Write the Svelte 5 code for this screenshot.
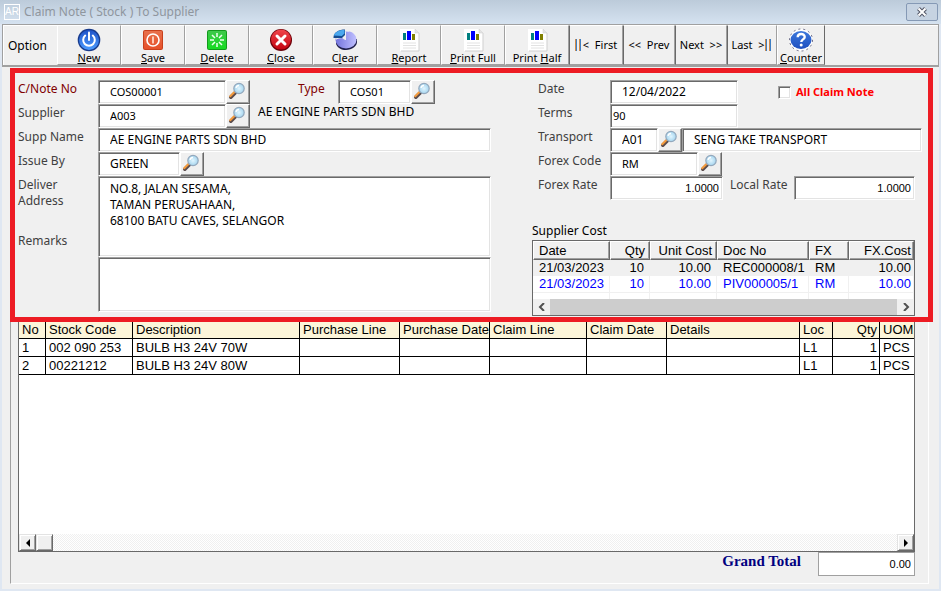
<script>

let note_no = $state("COS00001")
let note_type = $state("COS01")
let supplier = $state("A003")
let supp_name = $state("AE ENGINE PARTS SDN BHD")
let issue_by = $state("GREEN")
let address = $state("NO.8, JALAN SESAMA,\nTAMAN PERUSAHAAN,\n68100 BATU CAVES, SELANGOR")
let remarks = $state("")

let note_date = $state("12/04/2022")
let terms = $state("90")
let transport = $state("A01")
let transport_name = $state("SENG TAKE TRANSPORT")
let forex_code = $state("RM")
let forex_rate = $state("1.0000")
let local_rate = $state("1.0000")
let all_claims = $state(false)
let grand_total = $state("0.00")

// key is the position of the underlined letter
const actions = [
  { label: "New", key: 0, icon: "power" },
  { label: "Save", key: 0, icon: "save" },
  { label: "Delete", key: 0, icon: "delete" },
  { label: "Close", key: 0, icon: "close" },
  { label: "Clear", key: 1, icon: "pie" },
  { label: "Report", key: 0, icon: "report" },
  { label: "Print Full", key: 0, icon: "report" },
  { label: "Print Half", key: 6, icon: "report" }
]

const costs = [
  { date: "21/03/2023", qty: 10, unit: "10.00", doc: "REC000008/1", fx: "RM", cost: "10.00" },
  { date: "21/03/2023", qty: 10, unit: "10.00", doc: "PIV000005/1", fx: "RM", cost: "10.00" }
]

const items = [
  { no: 1, code: "002 090 253", desc: "BULB H3 24V 70W", loc: "L1", qty: 1, uom: "PCS" },
  { no: 2, code: "00221212", desc: "BULB H3 24V 80W", loc: "L1", qty: 1, uom: "PCS" }
]

</script>

{#snippet icon(name)}
  <svg class="icon" viewBox="0 0 24 24" aria-hidden="true">
    {#if name === "power"}
      <circle cx="12" cy="12" r="11.3" fill="#173a8c" />
      <circle cx="12" cy="12" r="10" fill="url(#g-blue)" />
      <path d="M8.2 7.6a5.8 5.8 0 1 0 7.6 0" fill="none" stroke="#fff" stroke-width="2" stroke-linecap="round" />
      <path d="M12 4.5v7.5" stroke="#fff" stroke-width="2" stroke-linecap="round" />
    {:else if name === "save"}
      <rect x="2" y="2" width="20" height="20" rx="2" fill="#c8401c" />
      <rect x="3" y="3" width="18" height="18" rx="1" fill="url(#g-orange)" />
      <circle cx="12" cy="12" r="6" fill="none" stroke="#fff" stroke-width="1.6" />
      <path d="M12 8.5v7" stroke="#ffd9c8" stroke-width="1.8" />
    {:else if name === "delete"}
      <rect x="2" y="2" width="20" height="20" rx="2" fill="#139a1c" />
      <rect x="3" y="3" width="18" height="18" rx="1" fill="url(#g-green)" />
      <path d="M12 5v4M12 15v4M5 12h4M15 12h4M7 7l3 3M14 14l3 3M17 7l-3 3M10 14l-3 3" stroke="#f0fff0" stroke-width="1.5" />
    {:else if name === "close"}
      <circle cx="12" cy="12" r="11" fill="#6a0008" />
      <circle cx="12" cy="11.6" r="10" fill="url(#g-red)" />
      <path d="M8 8l8 8M16 8l-8 8" stroke="#fff" stroke-width="3" stroke-linecap="round" />
    {:else if name === "pie"}
      <path d="M3 12v4c2 4 5 6 10 6 6 0 11-4 11-8v-3z" fill="#20204c" />
      <ellipse cx="13" cy="12" rx="10.5" ry="8.5" fill="url(#g-pie)" />
      <path d="M13 12V3.5H4L3 12z" fill="#efefef" />
      <path d="M3 11.500c2-1 4-1.500 6-1.500l4 2.500V8l3-4.400c4 .5 7 3.500 7.300 7L12 18z" fill="url(#g-pie)" />
      <path d="M0.5 9C1 4 6 1.500 12 1.500V7L9 10H0.5z" fill="#164d91" />
      <path d="M0.8 7.500C2 4 6 2 11.500 2V5.500L8.800 8z" fill="#4ba8ee" />
    {:else if name === "report"}
      <path d="M3 1h15l4 4v18H3z" fill="#fff" />
      <path d="M4 23h18V5" fill="none" stroke="#cfcfcf" />
      <path d="M18 1v4h4z" fill="#e4e4e4" stroke="#cfcfcf" stroke-width=".5" />
      <path d="M6 5h3v7H6z" fill="#008080" />
      <path d="M10 3h4v9h-4z" fill="#0000ff" />
      <path d="M15 6h3v6h-3z" fill="#808000" />
      <path d="M6 15h13M6 17.500h13M6 20h13" stroke="#e2e2e2" />
    {:else if name === "help"}
      <ellipse cx="12" cy="12" rx="11.5" ry="11" fill="#fff" stroke="#49496b" stroke-width=".8" stroke-dasharray="2 3" />
      <ellipse cx="12" cy="12" rx="10.500" ry="9" fill="url(#g-help)" />
      <path d="M8.700 9.300c0-4.400 7-4.300 7-.4 0 2.400-3.400 2.500-3.400 5" fill="none" stroke="#fff" stroke-width="2.400" />
      <circle cx="12.200" cy="17" r="1.500" fill="#fff" />
    {/if}
  </svg>
{/snippet}

{#snippet lookup(label)}
  <button class="lookup" aria-label={label}>
    <svg viewBox="0 0 18 18" aria-hidden="true">
      <path d="M2.800 15.200l5-5" stroke="#5b4c4c" stroke-width="3.600" stroke-linecap="round" />
      <path d="M2.200 14.200l4-4" stroke="#f39a3c" stroke-width="2" stroke-linecap="round" />
      <circle cx="11" cy="6.500" r="5.200" fill="url(#g-lens)" stroke="#94a8bc" stroke-width="1.200" />
      <path d="M8 6a3 3 0 0 1 3-2.500" fill="none" stroke="#fff" stroke-width="1.300" />
    </svg>
  </button>
{/snippet}

<svg class="defs" aria-hidden="true">
  <defs>
    <linearGradient id="g-blue" x1="0" y1="0" x2="0" y2="1"><stop stop-color="#1f52c8" /><stop offset="1" stop-color="#4c9cff" /></linearGradient>
    <linearGradient id="g-help" x1="0" y1="0" x2="0" y2="1"><stop stop-color="#3c78dc" /><stop offset="1" stop-color="#1f50c0" /></linearGradient>
    <linearGradient id="g-orange" x1="0" y1="0" x2="0" y2="1"><stop stop-color="#e8704c" /><stop offset="1" stop-color="#e6512a" /></linearGradient>
    <linearGradient id="g-green" x1="0" y1="0" x2="0" y2="1"><stop stop-color="#3fc84a" /><stop offset="1" stop-color="#16dc22" /></linearGradient>
    <linearGradient id="g-red" x1="0" y1="0" x2="0" y2="1"><stop stop-color="#f0454b" /><stop offset="1" stop-color="#c40410" /></linearGradient>
    <linearGradient id="g-pie"><stop stop-color="#7474dc" /><stop offset="1" stop-color="#c0c0ff" /></linearGradient>
    <radialGradient id="g-lens"><stop stop-color="#e2f6ff" /><stop offset="1" stop-color="#a4d4ee" /></radialGradient>
  </defs>
</svg>

<div class="window">
  <header class="titlebar">
    <span class="app_icon">AR</span>
    <h1>Claim Note ( Stock ) To Supplier</h1>
    <button class="win_close" aria-label="Close window">
      <svg viewBox="0 0 12 10" aria-hidden="true">
        <path d="M2.500 1.500l7 7M9.500 1.500l-7 7" stroke="#535666" stroke-width="4" />
        <path d="M2.500 1.500l7 7M9.500 1.500l-7 7" stroke="#fff" stroke-width="2" />
      </svg>
    </button>
  </header>

  <nav class="toolbar">
    <span class="option">Option</span>
    {#each actions as a}
      <button class="tool">
        {@render icon(a.icon)}
        <span>{a.label.slice(0, a.key)}<u>{a.label[a.key]}</u>{a.label.slice(a.key + 1)}</span>
      </button>
    {/each}
    <button class="step first"><i></i><i></i>&lt;&nbsp; First</button>
    <button class="step">&lt;&lt;&nbsp; Prev</button>
    <button class="step">Next&nbsp; &gt;&gt;</button>
    <button class="step last">Last&nbsp; &gt;<i></i><i></i></button>
    <button class="tool counter">
      {@render icon("help")}
      <span><u>C</u>ounter</span>
    </button>
  </nav>

  <main>
    <section class="frame">
      <div class="left">
        <label class="key" for="note_no">C/Note No</label>
        <div class="row">
          <input id="note_no" class="w128 small" bind:value={note_no}>
          {@render lookup("Find claim note")}
          <label class="key type" for="note_type">Type</label>
          <input id="note_type" class="w72 small" bind:value={note_type}>
          {@render lookup("Find type")}
        </div>

        <label for="supplier">Supplier</label>
        <div class="row">
          <input id="supplier" class="w128 small" bind:value={supplier}>
          {@render lookup("Find supplier")}
          <output for="supplier">{supp_name}</output>
        </div>

        <label for="supp_name">Supp Name</label>
        <div class="row"><input id="supp_name" class="grow" bind:value={supp_name}></div>

        <label for="issue_by">Issue By</label>
        <div class="row">
          <input id="issue_by" class="w82" bind:value={issue_by}>
          {@render lookup("Find issuer")}
        </div>

        <div class="stack">
          <label for="address">Deliver<br>Address</label>
          <label for="remarks">Remarks</label>
        </div>
        <div class="areas">
          <textarea id="address" rows="4" bind:value={address}></textarea>
          <textarea id="remarks" class="short" rows="2" bind:value={remarks}></textarea>
        </div>
      </div>

      <div class="right">
        <div class="fields">
          <label for="note_date">Date</label>
          <div class="row">
            <input id="note_date" class="w128" bind:value={note_date}>
            <label class="all"><input type="checkbox" bind:checked={all_claims}>All Claim Note</label>
          </div>

          <label for="terms">Terms</label>
          <div class="row"><input id="terms" class="w128 small tight" bind:value={terms}></div>

          <label for="transport">Transport</label>
          <div class="row">
            <input id="transport" class="w48" bind:value={transport}>
            {@render lookup("Find transport")}
            <input class="grow" aria-label="Transport name" bind:value={transport_name}>
          </div>

          <label for="forex_code">Forex Code</label>
          <div class="row">
            <input id="forex_code" class="w88 small" bind:value={forex_code}>
            {@render lookup("Find forex code")}
          </div>

          <label for="forex_rate">Forex Rate</label>
          <div class="row">
            <input id="forex_rate" class="w112 num" bind:value={forex_rate}>
            <label class="local" for="local_rate">Local Rate</label>
            <input id="local_rate" class="w120 num" bind:value={local_rate}>
          </div>
        </div>

        <h2>Supplier Cost</h2>
        <div class="cost_box">
          <table class="costs">
            <colgroup>
              <col class="c_date"><col class="c_qty"><col class="c_unit"><col><col class="c_fx"><col class="c_cost">
            </colgroup>
            <thead>
              <tr><th>Date</th><th class="r">Qty</th><th class="r">Unit Cost</th><th>Doc No</th><th>FX</th><th class="r">FX.Cost</th></tr>
            </thead>
            <tbody>
              {#each costs as c, n}
                <tr class:selected={n === 0}>
                  <td>{c.date}</td>
                  <td class="r">{c.qty}</td>
                  <td class="r">{c.unit}</td>
                  <td>{c.doc}</td>
                  <td>{c.fx}</td>
                  <td class="r">{c.cost}</td>
                </tr>
              {/each}
              <tr class="blank"><td></td><td></td><td></td><td></td><td></td><td></td></tr>
            </tbody>
          </table>
          <div class="flat_scroll">
            <button aria-label="Scroll costs left"><svg viewBox="0 0 8 8"><path d="M6 0L2 4l4 4" /></svg></button>
            <div class="flat_thumb"></div>
            <button aria-label="Scroll costs right"><svg viewBox="0 0 8 8"><path d="M2 0l4 4-4 4" /></svg></button>
          </div>
        </div>
      </div>
    </section>

    <section class="panel">
      <div class="grid_box">
        <table class="items">
          <colgroup>
            <col class="i_no"><col class="i_code"><col class="i_desc"><col class="i_line"><col class="i_bought"><col class="i_claim">
            <col class="i_date"><col><col class="i_loc"><col class="i_qty"><col class="i_uom">
          </colgroup>
          <thead>
            <tr>
              <th>No</th><th>Stock Code</th><th>Description</th><th>Purchase Line</th><th>Purchase Date</th><th>Claim Line</th>
              <th>Claim Date</th><th>Details</th><th>Loc</th><th class="r">Qty</th><th>UOM</th>
            </tr>
          </thead>
          <tbody>
            {#each items as item}
              <tr>
                <td>{item.no}</td>
                <td>{item.code}</td>
                <td>{item.desc}</td>
                <td></td><td></td><td></td><td></td><td></td>
                <td>{item.loc}</td>
                <td class="r">{item.qty}</td>
                <td>{item.uom}</td>
              </tr>
            {/each}
          </tbody>
        </table>
        <div class="classic_scroll">
          <button aria-label="Scroll items left"><svg viewBox="0 0 8 8"><path d="M6 0v8L2 4z" /></svg></button>
          <div class="classic_thumb"></div>
          <button class="end" aria-label="Scroll items right"><svg viewBox="0 0 8 8"><path d="M2 0v8l4-4z" /></svg></button>
        </div>
      </div>
      <footer>
        <label for="grand_total">Grand Total</label>
        <input id="grand_total" class="num" bind:value={grand_total}>
      </footer>
    </section>
  </main>
</div>

<style>
  :global(body) {
    background: #dfe7f2;
  }

  .defs {
    position: absolute;
    width: 0;
    height: 0;
  }

  .window {
    box-sizing: border-box;
    display: flex;
    flex-direction: column;
    min-height: 100vh;
    padding: 0 2px 2px;
    background: #dfe7f2;
    color: #000;
    font-family: "Noto Sans", Tahoma, sans-serif;
    font-size: 12px;
    line-height: 16px;
  }

  button, input, textarea {
    box-sizing: border-box;
    margin: 0;
    font: inherit;
    color: inherit;
    border-radius: 0;
  }

  .titlebar {
    display: flex;
    align-items: center;
    height: 24px;
    margin: 0 -2px;
    padding: 0 3px 0 4px;
    background: linear-gradient(#bccbda, #d5e2f0);
  }

  .app_icon {
    box-sizing: border-box;
    width: 16px;
    height: 16px;
    border: 1px solid #fff;
    color: #fff;
    font: 10px/14px "Liberation Sans", Arial, sans-serif;
    text-align: center;
  }

  h1 {
    flex: 1;
    margin: 0 4px;
    color: #8f969e;
    font-size: 12px;
    font-weight: normal;
    line-height: 16px;
  }

  .win_close {
    display: flex;
    align-items: center;
    justify-content: center;
    width: 32px;
    height: 18px;
    padding: 0;
    border: 1px solid #8599b5;
    border-radius: 2px;
    background: #c6d3e2;
  }

  .win_close svg {
    width: 12px;
    height: 10px;
  }

  .toolbar {
    display: flex;
    height: 43px;
    box-sizing: border-box;
    border: 1px solid #a0a0a0;
    border-bottom-width: 2px;
    background: #f0f0f0;
    box-shadow: inset 1px 1px #fff;
  }

  .option {
    width: 54px;
    box-sizing: border-box;
    padding-left: 5px;
    line-height: 42px;
  }

  .tool {
    display: flex;
    flex-direction: column;
    align-items: center;
    width: 64px;
    padding: 2px 0 0;
    border: 1px solid;
    border-color: #fff #a0a0a0 #a0a0a0 #fff;
    background: #f0f0f0;
    font-size: 11px;
    line-height: 12px;
    white-space: nowrap;
  }

  .tool .icon {
    width: 24px;
    height: 24px;
    flex: none;
  }

  .counter {
    width: 48px;
    border-right-color: #696969;
  }

  .step {
    display: flex;
    align-items: center;
    justify-content: center;
    width: 52px;
    padding: 0;
    border: 1px solid;
    border-color: #fff #a0a0a0 #a0a0a0 #696969;
    background: #f0f0f0;
    white-space: nowrap;
    font-size: 11px;
  }

  .step i {
    flex: none;
    width: 1px;
    height: 12px;
    margin-right: 2px;
    border-left: 1px solid #d08b4a;
    background: #3f7fc4;
  }

  .first {
    width: 54px;
  }

  .last {
    width: 50px;
  }

  main {
    flex: 1;
    display: flex;
    flex-direction: column;
    padding: 1px 6px 5px 8px;
    background: #f0f0f0;
  }

  .frame {
    display: grid;
    grid-template-columns: minmax(0, 473fr) minmax(0, 390fr);
    column-gap: 41px;
    padding: 7px 6px 0 3px;
    border: 5px solid #ed1c24;
  }

  .left {
    display: grid;
    grid-template-columns: 80px minmax(0, 1fr);
    grid-template-rows: repeat(4, 24px) auto;
    padding-bottom: 5px;
  }

  .fields {
    display: grid;
    grid-template-columns: 72px minmax(0, 1fr);
    grid-auto-rows: 24px;
    margin-left: 6px;
  }

  label {
    padding-top: 1px;
    color: #404040;
    white-space: nowrap;
  }

  label.key {
    color: #800000;
  }

  label.type {
    width: 40px;
    margin-left: 48px;
  }

  .row {
    display: flex;
    min-width: 0;
  }

  .row output {
    padding-left: 8px;
    white-space: nowrap;
  }

  .row input, textarea {
    min-width: 0;
    padding: 0 11px;
    border: 1px solid;
    border-color: #a0a0a0 #fff #fff #a0a0a0;
    background: #fff;
    box-shadow: inset 1px 1px #696969, inset -1px -1px #e3e3e3;
    outline: none;
  }

  .row .small {
    font-size: 11px;
  }

  .row .tight {
    padding: 0 2px;
  }

  .row .num, footer .num {
    padding: 0 3px;
    font: 11px/16px "Liberation Sans", Arial, sans-serif;
    text-align: right;
  }

  .w48 { width: 48px; }
  .w72 { width: 73px; }
  .w82 { width: 82px; }
  .w88 { width: 88px; }
  .w112 { width: 113px; }
  .w120 { width: 121px; }
  .w128 { width: 128px; }
  .grow { flex: 1; }

  .lookup {
    flex: none;
    width: 24px;
    height: 24px;
    padding: 1px 3px 3px 1px;
    border: 1px solid;
    border-color: #fff #696969 #696969 #fff;
    background: #f0f0f0;
    box-shadow: inset -1px -1px #a0a0a0;
    line-height: 0;
  }

  .lookup svg {
    width: 18px;
    height: 18px;
  }

  .stack {
    display: flex;
    flex-direction: column;
    gap: 23px;
  }

  .areas {
    display: flex;
    flex-direction: column;
  }

  textarea {
    height: 81px;
    padding: 4px 11px;
    resize: none;
    overflow: hidden;
  }

  textarea.short {
    height: 55px;
  }

  label.all {
    display: flex;
    align-items: center;
    gap: 5px;
    margin-left: 40px;
    padding-top: 0;
    color: #f00;
    font-size: 11px;
    font-weight: bold;
  }

  .all input {
    appearance: none;
    width: 13px;
    height: 13px;
    padding: 0;
  }

  .all input:checked {
    background: #404040;
  }

  .local {
    width: 64px;
    margin-left: 7px;
  }

  h2 {
    margin: 23px 0 1px;
    font-size: 12px;
    font-weight: normal;
    line-height: 16px;
  }

  .right .cost_box {
    margin-right: 7px;
    border: 1px solid #696969;
    background: #fff;
  }

  table {
    width: 100%;
    border-collapse: separate;
    border-spacing: 0;
    table-layout: fixed;
    font: 13px/16px "Liberation Sans", Arial, sans-serif;
  }

  th, td {
    padding: 0;
    font-weight: normal;
    text-align: left;
    white-space: nowrap;
    overflow: hidden;
  }

  .c_date { width: 77px; }
  .c_qty { width: 40px; }
  .c_unit { width: 67px; }
  .c_fx { width: 40px; }
  .c_cost { width: 65px; }

  .costs th {
    height: 17px;
    padding: 0 4px 0 5px;
    border: 1px solid;
    border-color: #fff #696969 #696969 #fff;
    background: #f0f0f0;
    box-shadow: inset -1px -1px #a0a0a0;
  }

  .costs td {
    height: 16px;
    padding: 0 5px 0 6px;
    border-right: 1px solid #f0f0f0;
    color: #00f;
  }

  .costs .selected td {
    background: #f0f0f0;
    color: #000;
  }

  .costs .blank td {
    height: 6px;
    border-top: 1px solid #f0f0f0;
  }

  .costs th:last-child, .costs td:last-child {
    padding-right: 2px;
  }

  th.r, td.r {
    text-align: right;
  }

  .flat_scroll {
    display: flex;
    height: 16px;
    background: #f0f0f0;
  }

  .flat_scroll button {
    width: 17px;
    padding: 0;
    border: 0;
    background: none;
    line-height: 0;
  }

  .flat_scroll svg {
    width: 8px;
    height: 8px;
    fill: none;
    stroke: #505050;
    stroke-width: 2;
  }

  .flat_thumb {
    flex: 1;
    background: #cdcdcd;
  }

  .panel {
    flex: 1;
    display: flex;
    flex-direction: column;
    margin-right: 4px;
    padding: 0 13px 7px 7px;
    border: solid;
    border-width: 0 1px 1px;
    border-color: #fff #fff #fff #a0a0a0;
  }

  .grid_box {
    flex: 1;
    display: flex;
    flex-direction: column;
    border: solid #696969;
    border-width: 0 1px 1px;
    background: #fff;
  }

  .i_no { width: 27px; }
  .i_code { width: 87px; }
  .i_desc { width: 167px; }
  .i_line { width: 100px; }
  .i_bought { width: 90px; }
  .i_claim { width: 97px; }
  .i_date { width: 80px; }
  .i_loc { width: 33px; }
  .i_qty { width: 47px; }
  .i_uom { width: 34px; }

  .items th, .items td {
    height: 17px;
    padding: 0 0 0 3px;
    border: solid #000;
    border-width: 0 1px 1px 0;
  }

  .items th {
    height: 16px;
    background: #fcf5d9;
  }

  .items th:last-child, .items td:last-child {
    border-right: 0;
  }

  .items .r {
    padding: 0 2px 0 0;
  }

  .classic_scroll {
    display: flex;
    height: 17px;
    margin-top: auto;
    background: repeating-conic-gradient(#f0f0f0 0 25%, #fff 0 50%) 0 0 / 2px 2px;
  }

  .classic_scroll button, .classic_thumb {
    box-sizing: border-box;
    width: 17px;
    padding: 0;
    border: 1px solid;
    border-color: #e3e3e3 #696969 #696969 #e3e3e3;
    background: #f0f0f0;
    box-shadow: inset 1px 1px #fff, inset -1px -1px #a0a0a0;
    line-height: 0;
  }

  .classic_scroll svg {
    width: 8px;
    height: 8px;
  }

  .classic_scroll .end {
    margin-left: auto;
  }

  footer {
    display: flex;
    justify-content: flex-end;
    gap: 17px;
  }

  footer label {
    color: #000080;
    font: bold 15px/16px "Liberation Serif", "Times New Roman", serif;
  }

  footer input {
    width: 97px;
    height: 24px;
    border: 1px solid #a0a0a0;
    background: #fff;
    outline: none;
  }
</style>
